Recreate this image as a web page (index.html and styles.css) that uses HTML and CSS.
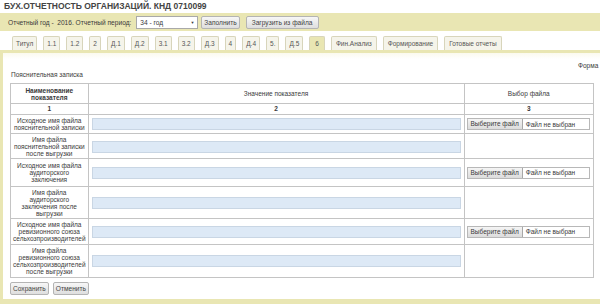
FILE: index.html
```
<!DOCTYPE html>
<html lang="ru">
<head>
    <meta charset="UTF-8">
    <title>БУХ.ОТЧЕТНОСТЬ ОРГАНИЗАЦИЙ</title>
    <link rel="stylesheet" href="styles.css">
</head>
<body>
    <div class="page-title">БУХ.ОТЧЕТНОСТЬ ОРГАНИЗАЦИЙ. КНД 0710099</div>

    <div class="toolbar">
        <span class="toolbar-label">Отчетный год - &nbsp;2016. Отчетный период:</span>
        <div class="select-box"><span>34 - год</span><span class="arrow">▼</span></div>
        <button class="btn">Заполнить</button>
        <button class="btn btn-wide">Загрузить из файла</button>
    </div>

    <div class="tabs">
        <div class="tab">Титул</div>
        <div class="tab">1.1</div>
        <div class="tab">1.2</div>
        <div class="tab">2</div>
        <div class="tab">Д.1</div>
        <div class="tab">Д.2</div>
        <div class="tab">3.1</div>
        <div class="tab">3.2</div>
        <div class="tab">Д.3</div>
        <div class="tab">4</div>
        <div class="tab">Д.4</div>
        <div class="tab">5.</div>
        <div class="tab">Д.5</div>
        <div class="tab active">6</div>
        <div class="tab">Фин.Анализ</div>
        <div class="tab">Формирование</div>
        <div class="tab">Готовые отчеты</div>
    </div>

    <div class="content">
        <div class="form-code">Форма</div>
        <div class="section-name">Пояснительная записка</div>

        <table class="report">
            <tr class="head">
                <th class="col-name">Наименование<br>показателя</th>
                <th class="col-value">Значение показателя</th>
                <th class="col-file">Выбор файла</th>
            </tr>
            <tr class="nums">
                <td>1</td>
                <td>2</td>
                <td>3</td>
            </tr>
            <tr>
                <td class="name">Исходное имя файла<br>пояснительной записки</td>
                <td><div class="field"></div></td>
                <td><div class="file-pick"><span class="file-btn">Выберите файл</span><span>Файл не выбран</span></div></td>
            </tr>
            <tr class="compact">
                <td class="name">Имя файла<br>пояснительной записки<br>после выгрузки</td>
                <td><div class="field"></div></td>
                <td></td>
            </tr>
            <tr class="tall">
                <td class="name">Исходное имя файла<br>аудиторского<br>заключения</td>
                <td><div class="field"></div></td>
                <td><div class="file-pick"><span class="file-btn">Выберите файл</span><span>Файл не выбран</span></div></td>
            </tr>
            <tr class="compact">
                <td class="name">Имя файла<br>аудиторского<br>заключения после<br>выгрузки</td>
                <td><div class="field"></div></td>
                <td></td>
            </tr>
            <tr>
                <td class="name">Исходное имя файла<br>ревизионного союза<br>сельхозпроизводителей</td>
                <td><div class="field"></div></td>
                <td><div class="file-pick"><span class="file-btn">Выберите файл</span><span>Файл не выбран</span></div></td>
            </tr>
            <tr>
                <td class="name">Имя файла<br>ревизионного союза<br>сельхозпроизводителей<br>после выгрузки</td>
                <td><div class="field"></div></td>
                <td></td>
            </tr>
        </table>

        <div class="actions">
            <button class="btn">Сохранить</button>
            <button class="btn">Отменить</button>
        </div>
    </div>
</body>
</html>
```

FILE: styles.css
```
/* основные цвета */
:root {
    --bar-color: #e9e6b3;
    --tab-background: #f5f4ea;
    --tab-border: #d8d5bb;
    --grid-color: #c4c4c4;
    --field-background: #dde9f6;
    --field-border: #c9d6e4;
    --text-color: #3a3a3a;
}

html,
body {
    margin: 0;
    height: 100%;
    background: #ffffff;
    overflow: hidden;
}

body {
    font-family: "Liberation Sans", Arial, sans-serif;
    font-size: 7px;
    color: var(--text-color);
    display: flex;
    flex-direction: column;
}

.page-title {
    height: 13px;
    line-height: 12px;
    padding-left: 4px;
    font-size: 8.5px;
    font-weight: bold;
    color: #444444;
}

.toolbar {
    height: 18px;
    background: var(--bar-color);
    display: flex;
    align-items: center;
    padding-left: 8px;
    font-size: 6.6px;
}

.toolbar-label {
    margin-right: 5px;
    white-space: nowrap;
}

.select-box {
    width: 54px;
    height: 11px;
    border: 1px solid #a9a9a9;
    background: #ffffff;
    display: flex;
    align-items: center;
    justify-content: space-between;
    padding: 0 3px;
    margin-right: 3px;
}

.select-box .arrow {
    font-size: 4px;
}

.btn {
    height: 13px;
    padding: 0 2px;
    border: 1px solid #b4b4b4;
    border-radius: 2px;
    background: linear-gradient(#f7f7f7, #dedede);
    font-family: inherit;
    font-size: 6.6px;
    color: #444444;
    line-height: 11px;
    margin-right: 6px;
}

.btn-wide {
    padding: 0 5px;
}

.tabs {
    height: 19px;
    display: flex;
    align-items: flex-end;
    gap: 6px;
    padding-left: 12px;
    border-bottom: 3px solid var(--bar-color);
}

.tab {
    height: 13px;
    line-height: 13px;
    padding: 0 3px;
    border: 1px solid var(--tab-border);
    border-bottom: none;
    border-radius: 2px 2px 0 0;
    background: var(--tab-background);
    font-size: 6.5px;
    color: #555555;
    white-space: nowrap;
}

.tab.active {
    background: var(--bar-color);
    padding: 0 5px;
}

.tab:nth-last-child(-n+3) {
    padding: 0 4px;
}

.content {
    flex: 1;
    border-left: 3px solid var(--bar-color);
    border-bottom: 5px solid var(--bar-color);
    background: linear-gradient(#fbfaee, #ffffff 6px);
    padding-top: 9px;
}

.form-code {
    padding-left: 575px;
    white-space: nowrap;
    height: 8px;
    line-height: 8px;
    font-size: 6.5px;
}

.section-name {
    margin: 1px 0 0 8px;
    height: 8px;
    line-height: 8px;
    font-size: 6.5px;
}

.report {
    margin: 4px 0 0 7px;
    width: 584px;
    border-collapse: collapse;
    border: 1px solid var(--grid-color);
}

.report th,
.report td {
    border: 1px solid var(--grid-color);
    padding: 2px 2px;
    line-height: 7px;
    font-size: 6.5px;
    text-align: center;
}

.report .head th {
    height: 15px;
    font-weight: bold;
}

.col-name {
    width: 72px;
}

.col-value {
    width: 371px;
    font-weight: normal !important;
}

.col-file {
    font-weight: normal !important;
}

.report .nums td {
    font-weight: bold;
    padding: 1px 2px;
    line-height: 8px;
}

.report tr.tall td {
    padding: 3px 2px;
}

.report tr.compact td {
    padding: 2px 2px 1px;
}

.field {
    height: 10px;
    margin: 0 1px;
    background: var(--field-background);
    border: 1px solid var(--field-border);
}

.file-pick {
    display: flex;
    align-items: center;
    height: 10px;
    border: 1px solid #b8b8b8;
    background: #ffffff;
    margin-right: 1px;
}

.file-pick span {
    white-space: nowrap;
    margin-left: 3px;
}

.file-pick .file-btn {
    margin: 0;
    height: 10px;
    line-height: 10px;
    padding: 0 3px;
    border-right: 1px solid #a8a8a8;
    background: linear-gradient(#f5f5f5, #dcdcdc);
}

.actions {
    display: flex;
    padding: 4px 0 0 7px;
}

.actions .btn {
    margin-right: 4px;
}
```
